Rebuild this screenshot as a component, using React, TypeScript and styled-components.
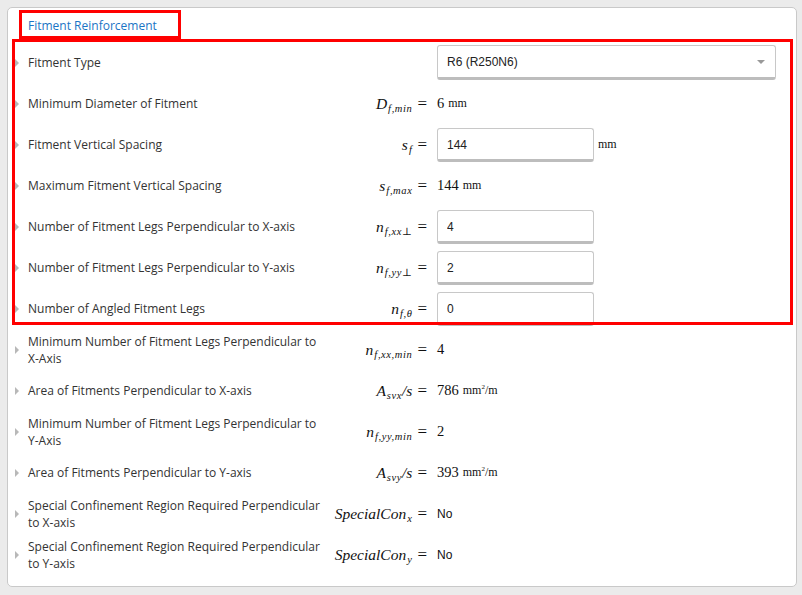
import React from 'react';
import styled, { createGlobalStyle } from 'styled-components';

const GlobalStyle = createGlobalStyle`
  html, body {
    margin: 0;
    padding: 0;
    background: #ebebeb;
    font-family: 'Open Sans', 'Liberation Sans', sans-serif;
  }
`;

const Panel = styled.div`
  margin: 7px 5px 0 7px;
  background: #fff;
  border: 1px solid #c9c9c9;
  border-radius: 5px;
  padding-bottom: 11px;
`;

const Header = styled.div`
  height: 34px;
  box-sizing: border-box;
  padding: 2px 0 0 11px;
`;

const Title = styled.div`
  display: inline-block;
  box-sizing: border-box;
  width: 162px;
  height: 29px;
  border: 3px solid #ff0000;
  padding: 1px 0 0 6px;
  line-height: 23px;
  font-size: 12px;
  color: #1b74c5;
`;

const Group = styled.div`
  position: relative;
`;

const Highlight = styled.div`
  position: absolute;
  top: -3px;
  left: 4px;
  right: 3px;
  bottom: 4px;
  border: 3px solid #ff0000;
  pointer-events: none;
`;

const Row = styled.div`
  display: grid;
  grid-template-columns: 14px 295px 104px 1fr;
  align-items: center;
  height: 41px;
  padding-left: 6px;
`;

const Caret = styled.span`
  width: 0;
  height: 0;
  margin-left: 1px;
  border-left: 4px solid #b8b8b8;
  border-top: 4px solid transparent;
  border-bottom: 4px solid transparent;
`;

const Label = styled.div`
  font-size: 12px;
  line-height: 17px;
  color: #333;
`;

const MathCell = styled.div`
  text-align: right;
  white-space: nowrap;
  font-family: 'Liberation Serif', 'DejaVu Serif', serif;
  font-size: 15.5px;
  color: #111;
`;

const Var = styled.span`
  font-style: italic;
`;

const Sub = styled.sub`
  font-style: italic;
  font-size: 10.5px;
  letter-spacing: 0.6px;
  vertical-align: -3px;
  line-height: 0;
  margin-left: 1px;
`;

const Eq = styled.span`
  font-size: 17px;
  margin-left: 5px;
`;

const ValueCell = styled.div`
  display: flex;
  align-items: center;
  padding-left: 10px;
`;

const Num = styled.span`
  font-family: 'Liberation Serif', 'DejaVu Serif', serif;
  font-size: 14.5px;
  color: #111;
`;

const Unit = styled.span`
  font-family: 'Liberation Serif', 'DejaVu Serif', serif;
  font-size: 12px;
  color: #111;
  margin-left: 4px;

  sup {
    font-size: 7px;
    line-height: 0;
  }
`;

const Plain = styled.span`
  font-family: 'Liberation Sans', Arial, sans-serif;
  font-size: 12px;
  color: #111;
`;

const Field = styled.input`
  box-sizing: border-box;
  width: 157px;
  height: 34px;
  border: 1px solid #c8c8c8;
  border-bottom: 3px solid #bdbdbd;
  border-radius: 3px;
  padding: 2px 9px 0;
  font-family: 'Liberation Sans', Arial, sans-serif;
  font-size: 12px;
  color: #222;
  background: #fff;
  outline: none;
`;

const Dropdown = styled.div`
  box-sizing: border-box;
  width: 339px;
  height: 35px;
  display: flex;
  align-items: center;
  justify-content: space-between;
  border: 1px solid #c8c8c8;
  border-bottom: 3px solid #bdbdbd;
  border-radius: 3px;
  padding: 1px 10px 0 9px;
  font-family: 'Liberation Sans', Arial, sans-serif;
  font-size: 12px;
  color: #222;
`;

const Arrow = styled.span`
  width: 0;
  height: 0;
  border-top: 4px solid #999;
  border-left: 4.5px solid transparent;
  border-right: 4.5px solid transparent;
`;

type SymProps = { base: string; sub?: string; tail?: string };

const Sym: React.FC<SymProps> = ({ base, sub, tail }) => (
  <MathCell>
    <Var>{base}</Var>
    {sub && <Sub>{sub}</Sub>}
    {tail && <Var>{tail}</Var>}
    <Eq>=</Eq>
  </MathCell>
);

const Quantity: React.FC<{ value: string; unit?: React.ReactNode }> = ({ value, unit }) => (
  <>
    <Num>{value}</Num>
    {unit && <Unit>{unit}</Unit>}
  </>
);

const perArea = (
  <>
    mm<sup>2</sup>/m
  </>
);

type Item = {
  label: string;
  sym?: SymProps;
  value: React.ReactNode;
};

const inputs: Item[] = [
  {
    label: 'Fitment Type',
    value: (
      <Dropdown>
        <span>R6 (R250N6)</span>
        <Arrow />
      </Dropdown>
    ),
  },
  {
    label: 'Minimum Diameter of Fitment',
    sym: { base: 'D', sub: 'f,min' },
    value: <Quantity value="6" unit="mm" />,
  },
  {
    label: 'Fitment Vertical Spacing',
    sym: { base: 's', sub: 'f' },
    value: (
      <>
        <Field defaultValue="144" />
        <Unit>mm</Unit>
      </>
    ),
  },
  {
    label: 'Maximum Fitment Vertical Spacing',
    sym: { base: 's', sub: 'f,max' },
    value: <Quantity value="144" unit="mm" />,
  },
  {
    label: 'Number of Fitment Legs Perpendicular to X-axis',
    sym: { base: 'n', sub: 'f,xx⊥' },
    value: <Field defaultValue="4" />,
  },
  {
    label: 'Number of Fitment Legs Perpendicular to Y-axis',
    sym: { base: 'n', sub: 'f,yy⊥' },
    value: <Field defaultValue="2" />,
  },
  {
    label: 'Number of Angled Fitment Legs',
    sym: { base: 'n', sub: 'f,θ' },
    value: <Field defaultValue="0" />,
  },
];

const results: Item[] = [
  {
    label: 'Minimum Number of Fitment Legs Perpendicular to X-Axis',
    sym: { base: 'n', sub: 'f,xx,min' },
    value: <Quantity value="4" />,
  },
  {
    label: 'Area of Fitments Perpendicular to X-axis',
    sym: { base: 'A', sub: 'svx', tail: '/s' },
    value: <Quantity value="786" unit={perArea} />,
  },
  {
    label: 'Minimum Number of Fitment Legs Perpendicular to Y-Axis',
    sym: { base: 'n', sub: 'f,yy,min' },
    value: <Quantity value="2" />,
  },
  {
    label: 'Area of Fitments Perpendicular to Y-axis',
    sym: { base: 'A', sub: 'svy', tail: '/s' },
    value: <Quantity value="393" unit={perArea} />,
  },
  {
    label: 'Special Confinement Region Required Perpendicular to X-axis',
    sym: { base: 'SpecialCon', sub: 'x' },
    value: <Plain>No</Plain>,
  },
  {
    label: 'Special Confinement Region Required Perpendicular to Y-axis',
    sym: { base: 'SpecialCon', sub: 'y' },
    value: <Plain>No</Plain>,
  },
];

const renderRow = (item: Item) => (
  <Row key={item.label}>
    <Caret />
    <Label>{item.label}</Label>
    {item.sym ? <Sym {...item.sym} /> : <MathCell />}
    <ValueCell>{item.value}</ValueCell>
  </Row>
);

export default function App() {
  return (
    <>
      <GlobalStyle />
      <Panel>
        <Header>
          <Title>Fitment Reinforcement</Title>
        </Header>
        <Group>
          {inputs.map(renderRow)}
          <Highlight />
        </Group>
        {results.map(renderRow)}
      </Panel>
    </>
  );
}
